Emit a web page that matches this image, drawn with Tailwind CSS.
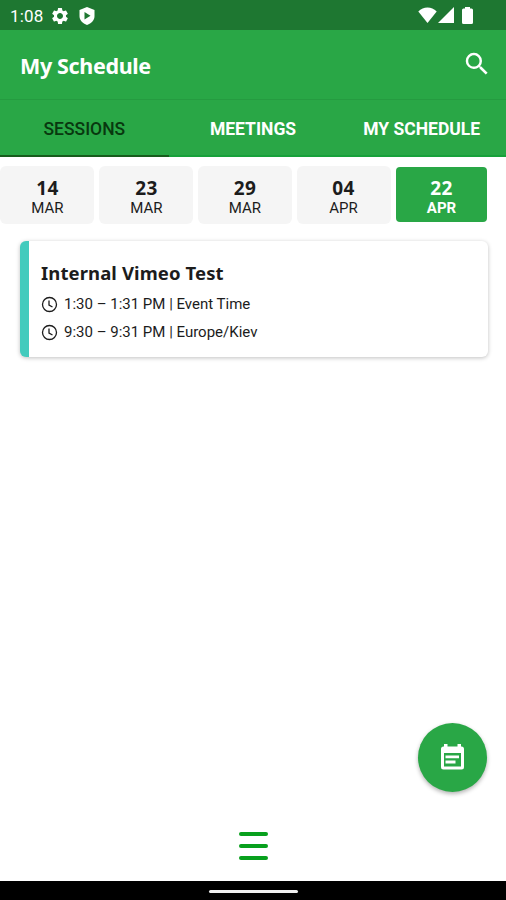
<!DOCTYPE html>
<html lang="en">
<head>
  <meta charset="UTF-8" />
  <meta name="viewport" content="width=device-width, initial-scale=1.0"/>
  <title>My Schedule</title>
  <script src="https://cdn.jsdelivr.net/npm/@tailwindcss/browser@4"></script>
</head>
<body class="bg-white font-[Roboto,sans-serif] text-[#1c1c1c]">
  <div class="relative flex flex-col w-[506px] h-[900px] overflow-hidden">

    <!-- Status bar -->
    <div class="h-[30px] shrink-0 bg-[#1e7731] text-white flex items-center pl-[10px] pr-[30px]">
      <span class="w-[39px] text-[17px] leading-none tracking-[0.2px] pt-[2px]">1:08</span>
      <svg class="w-[20px] h-[20px] ml-[1px] mt-[1px]" viewBox="0 0 24 24" fill="currentColor"><path d="M19.14 12.94c.04-.3.06-.61.06-.94 0-.32-.02-.64-.07-.94l2.03-1.58a.49.49 0 0 0 .12-.61l-1.92-3.32a.488.488 0 0 0-.59-.22l-2.39.96c-.5-.38-1.03-.7-1.62-.94l-.36-2.54a.484.484 0 0 0-.48-.41h-3.84c-.24 0-.43.17-.47.41l-.36 2.54c-.59.24-1.13.57-1.62.94l-2.39-.96c-.22-.08-.47 0-.59.22L2.74 8.87c-.12.21-.08.47.12.61l2.03 1.58c-.05.3-.09.63-.09.94s.02.64.07.94l-2.03 1.58a.49.49 0 0 0-.12.61l1.92 3.32c.12.22.37.29.59.22l2.39-.96c.5.38 1.03.7 1.62.94l.36 2.54c.05.24.24.41.48.41h3.84c.24 0 .44-.17.47-.41l.36-2.54c.59-.24 1.13-.56 1.62-.94l2.39.96c.22.08.47 0 .59-.22l1.92-3.32c.12-.22.07-.47-.12-.61l-2.01-1.58zM12 15.6c-1.98 0-3.6-1.62-3.6-3.6s1.62-3.6 3.6-3.6 3.6 1.62 3.6 3.6-1.62 3.6-3.6 3.6z"/></svg>
      <svg class="w-[16px] h-[18px] ml-[9px] mt-px" viewBox="0 0 16 18"><path fill="currentColor" d="M8 0 15.500 3v6c0 4-3 7.500-7.500 9C3.500 16.500.5 13 .5 9V3z"/><path fill="#1e7731" d="M5.500 5v7.500L11.500 8.700z"/></svg>
      <div class="ml-auto flex items-center">
        <svg class="w-[19px] h-[16px]" viewBox="0 0 19 16" fill="currentColor"><path d="M9.500 16 .3 4.500C3 2 6 .6 9.500.6S16 2 18.700 4.500z"/></svg>
        <svg class="w-[16px] h-[16px] ml-px mr-[8px]" viewBox="0 0 16 16" fill="currentColor"><path d="M0 16 16 0v16z"/></svg>
        <svg class="w-[11px] h-[17px] mr-[3px]" viewBox="0 0 11 17" fill="currentColor"><path d="M3 0h5v1.500h1.500Q11 1.500 11 3v12.500q0 1.500-1.500 1.500h-8Q0 17 0 15.500V3q0-1.500 1.500-1.500H3z"/></svg>
      </div>
    </div>

    <!-- App bar -->
    <header class="h-[70px] shrink-0 bg-[#29a746] border-b border-[#259b40] text-white flex items-center justify-between pl-[20px] pr-[14px]">
      <h1 class="font-['Noto_Sans',sans-serif] font-bold text-[21.500px] leading-none tracking-[-0.35px] pt-[3px]">My Schedule</h1>
      <svg class="w-[30px] h-[30px] -mt-px" viewBox="0 0 24 24" fill="currentColor"><path d="M15.500 14h-.79l-.28-.27A6.471 6.471 0 0 0 16 9.500 6.500 6.500 0 1 0 9.500 16c1.610 0 3.090-.59 4.230-1.570l.27.28v.79l5 4.990L20.490 19l-4.990-5zm-6 0C7.010 14 5 11.990 5 9.500S7.010 5 9.500 5 14 7.010 14 9.500 11.990 14 9.500 14z"/></svg>
    </header>

    <!-- Tabs -->
    <nav class="h-[57px] shrink-0 grid grid-cols-3 bg-[#29a746] text-[17.500px] leading-none text-center text-white font-bold">
      <div class="border-b-2 border-[#175d1c] pt-[21px] text-[#08380f] font-medium">SESSIONS</div>
      <div class="border-b-2 border-[#17a13a] pt-[21px]">MEETINGS</div>
      <div class="border-b-2 border-[#17a13a] pt-[21px]">MY SCHEDULE</div>
    </nav>

    <!-- Days -->
    <div class="flex shrink-0 gap-[5px] pt-[9px] h-[84px] text-center text-[15px]">
      <div class="w-[94px] h-[58px] rounded-md bg-[#f5f5f5] pt-[12px] pl-px">
        <p class="font-['Noto_Sans',sans-serif] font-bold text-[19px] leading-[21px] tracking-[0.5px]">14</p>
        <p class="leading-[18px]">MAR</p>
      </div>
      <div class="w-[94px] h-[58px] rounded-md bg-[#f5f5f5] pt-[12px] pl-px">
        <p class="font-['Noto_Sans',sans-serif] font-bold text-[19px] leading-[21px] tracking-[0.5px]">23</p>
        <p class="leading-[18px]">MAR</p>
      </div>
      <div class="w-[94px] h-[58px] rounded-md bg-[#f5f5f5] pt-[12px]">
        <p class="font-['Noto_Sans',sans-serif] font-bold text-[19px] leading-[21px] tracking-[0.5px]">29</p>
        <p class="leading-[18px]">MAR</p>
      </div>
      <div class="w-[94px] h-[58px] rounded-md bg-[#f5f5f5] pt-[12px] pr-px">
        <p class="font-['Noto_Sans',sans-serif] font-bold text-[19px] leading-[21px] tracking-[0.5px]">04</p>
        <p class="leading-[18px]">APR</p>
      </div>
      <div class="w-[91px] h-[55px] mt-px rounded-[4px] bg-[#29a746] pt-[11px] text-white">
        <p class="font-['Noto_Sans',sans-serif] font-bold text-[19px] leading-[21px] tracking-[0.5px]">22</p>
        <p class="leading-[18px] font-bold">APR</p>
      </div>
    </div>

    <!-- Session card -->
    <article class="w-[468px] h-[116px] ml-[20px] shrink-0 rounded-md border-l-[9px] border-[#42cbbd] bg-white shadow-[0_1px_4px_rgba(0,0,0,0.25)] pl-[12px] pt-[20px]">
      <h2 class="font-['Noto_Sans',sans-serif] font-bold text-[18.500px] leading-[24px] tracking-[0.1px] whitespace-nowrap">Internal Vimeo Test</h2>
      <div class="flex items-center gap-[6px] h-[28px] mt-[5px] text-[15px]">
        <svg class="w-[17px] h-[17px]" viewBox="0 0 17 17" fill="none" stroke="currentColor" stroke-width="1.300"><circle cx="8.500" cy="8.500" r="7"/><path d="M8 4.500v4.500l3.500 2"/></svg>
        <span>1:30 – 1:31 PM | Event Time</span>
      </div>
      <div class="flex items-center gap-[6px] h-[28px] text-[15px]">
        <svg class="w-[17px] h-[17px]" viewBox="0 0 17 17" fill="none" stroke="currentColor" stroke-width="1.300"><circle cx="8.500" cy="8.500" r="7"/><path d="M8 4.500v4.500l3.500 2"/></svg>
        <span>9:30 – 9:31 PM | Europe/Kiev</span>
      </div>
    </article>

    <!-- Floating button -->
    <button class="absolute left-[418px] top-[723px] size-[69px] rounded-full bg-[#29a746] text-white shadow-[0_2px_4px_rgba(0,0,0,0.3)] flex items-center justify-center pb-[2px]">
      <svg class="w-[23px] h-[26px]" viewBox="0 0 23 26"><path fill="currentColor" d="M3 0h3.500v2.500h10V0H20v2.500h.5Q23 2.500 23 5v18q0 2.500-2.500 2.500h-18Q0 25.500 0 23V5Q0 2.500 2.500 2.500H3z"/><path fill="#29a746" d="M3 9h17v13.500H3z"/><path fill="currentColor" d="M4.500 11.500h13.500v2.800H4.500zM4.500 16.500h10v3h-10z"/></svg>
    </button>

    <!-- Bottom menu -->
    <div class="mt-auto flex flex-col items-center gap-[8px] pb-[21px]">
      <span class="w-[29px] h-[4px] rounded-full bg-[#08a01d]"></span>
      <span class="w-[29px] h-[4px] rounded-full bg-[#08a01d]"></span>
      <span class="w-[29px] h-[4px] rounded-full bg-[#08a01d]"></span>
    </div>
    <div class="h-[19px] shrink-0 bg-black flex items-center justify-center pt-[2px]">
      <span class="w-[89px] h-[3px] rounded-full bg-[#f0f0f0]"></span>
    </div>
  </div>
</body>
</html>
